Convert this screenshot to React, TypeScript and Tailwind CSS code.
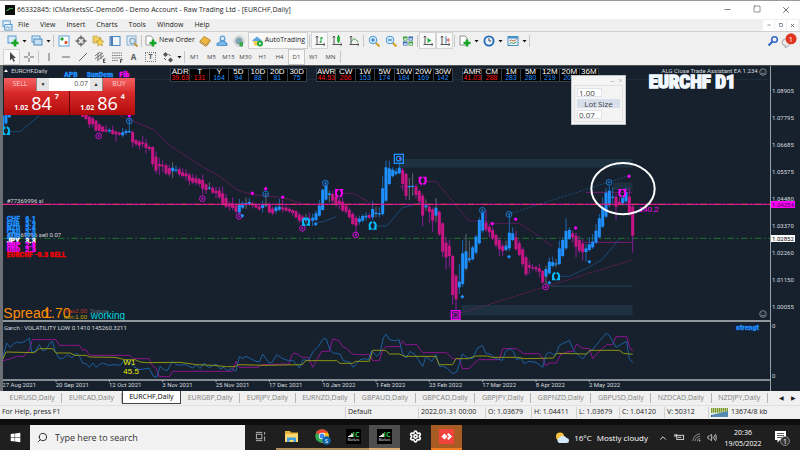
import { ReactNode, useState } from "react";
import { Search, Minus, Square, X, ChevronUp, Settings } from "lucide-react";
import { FaWindows } from "react-icons/fa";

// [high, top, bottom, low, kind], kind: 0 down, 1 up, 2 up with grey wick
type Bar = [number, number, number, number, number];

const leftBars: Bar[] = [
  [155, 155, 190, 195, 1],
  [150, 153, 178, 182, 1],
  [150, 153, 160, 162, 1],
];

const bars: Bar[] = [
  [150, 153, 158, 160, 0], [150, 153, 165, 168, 0], [155, 158, 181, 192, 0],
  [158, 163, 181, 190, 0], [168, 170, 200, 203, 0], [178, 181, 200, 205, 0],
  [185, 188, 203, 206, 0], [183, 197, 203, 205, 0], [192, 198, 201, 208, 1],
  [185, 198, 210, 213, 0], [200, 203, 211, 233, 0], [203, 206, 212, 216, 0],
  [192, 205, 214, 220, 1], [195, 201, 207, 213, 1], [160, 201, 204, 207, 1],
  [200, 204, 235, 250, 0], [225, 228, 241, 246, 0], [228, 233, 245, 256, 0],
  [215, 235, 240, 250, 0], [225, 238, 252, 268, 0], [243, 249, 255, 260, 0],
  [247, 249, 300, 308, 0], [262, 278, 320, 330, 0], [282, 300, 307, 333, 0],
  [290, 303, 307, 325, 0], [298, 304, 328, 333, 0], [302, 312, 331, 338, 0],
  [295, 311, 322, 342, 2], [305, 316, 320, 326, 1], [310, 316, 331, 338, 0],
  [312, 325, 336, 341, 0], [315, 328, 337, 350, 0], [325, 332, 350, 363, 0],
  [330, 341, 355, 360, 0], [333, 343, 357, 363, 0], [342, 345, 360, 368, 0],
  [332, 348, 374, 392, 0], [358, 361, 378, 390, 0], [355, 370, 374, 378, 2],
  [365, 372, 386, 390, 0], [368, 380, 388, 403, 0], [368, 380, 400, 405, 0],
  [368, 388, 422, 425, 0], [390, 402, 428, 432, 0], [412, 418, 428, 440, 0],
  [400, 418, 432, 438, 0], [420, 425, 443, 448, 0], [405, 422, 445, 452, 1],
  [412, 418, 431, 436, 1], [400, 417, 422, 435, 2], [402, 414, 420, 425, 1],
  [412, 418, 424, 433, 0], [418, 422, 431, 434, 0], [422, 428, 436, 440, 0],
  [410, 422, 432, 446, 1], [392, 421, 425, 430, 2], [415, 422, 445, 448, 0],
  [428, 434, 448, 454, 0], [420, 430, 441, 450, 1], [405, 428, 437, 442, 1],
  [408, 430, 436, 446, 0], [425, 431, 440, 443, 0], [430, 435, 442, 448, 0],
  [436, 438, 447, 455, 0], [438, 442, 460, 464, 0], [446, 452, 470, 478, 0],
  [452, 458, 472, 485, 0], [450, 462, 470, 478, 2], [446, 464, 470, 476, 0],
  [450, 461, 470, 486, 1], [440, 448, 468, 472, 1], [408, 425, 455, 458, 1],
  [374, 377, 438, 440, 1], [352, 365, 407, 410, 1], [380, 388, 393, 415, 2],
  [380, 390, 410, 420, 0], [380, 397, 420, 428, 0], [402, 410, 423, 436, 0],
  [400, 413, 440, 444, 0], [420, 425, 443, 450, 0], [430, 438, 460, 464, 0],
  [445, 450, 480, 484, 0], [455, 462, 485, 510, 0], [455, 464, 474, 482, 1],
  [450, 456, 470, 475, 1], [445, 455, 460, 470, 1], [448, 453, 461, 466, 0],
  [410, 435, 460, 470, 1], [428, 446, 450, 460, 2], [430, 448, 452, 460, 1],
  [335, 373, 450, 455, 1], [290, 310, 410, 414, 1], [290, 313, 360, 364, 1],
  [310, 317, 337, 340, 1], [312, 322, 330, 335, 1], [300, 311, 328, 331, 1],
  [312, 318, 360, 380, 0], [325, 330, 396, 408, 0], [342, 366, 369, 408, 2],
  [328, 365, 369, 396, 2], [360, 367, 393, 404, 0], [376, 381, 412, 418, 0],
  [388, 395, 455, 486, 0], [406, 424, 430, 440, 2], [420, 428, 444, 476, 0],
  [430, 436, 470, 503, 0], [403, 431, 455, 475, 2], [440, 443, 511, 516, 0],
  [475, 478, 563, 580, 0], [520, 536, 580, 616, 0], [528, 545, 576, 610, 0],
  [572, 576, 693, 722, 0], [630, 635, 706, 740, 0], [600, 653, 670, 690, 1],
  [528, 568, 660, 668, 1], [510, 562, 614, 620, 2], [530, 583, 589, 596, 2],
  [545, 550, 586, 590, 1], [513, 518, 566, 572, 1], [460, 468, 538, 542, 1],
  [438, 446, 500, 506, 1], [438, 476, 497, 505, 0], [480, 488, 505, 520, 0],
  [490, 498, 524, 528, 0], [508, 513, 544, 550, 0], [520, 528, 556, 576, 0],
  [538, 546, 561, 576, 0], [530, 545, 558, 562, 2], [453, 506, 553, 562, 1],
  [490, 508, 528, 532, 1], [500, 520, 556, 560, 0], [530, 538, 573, 576, 0],
  [550, 556, 600, 608, 0], [574, 580, 631, 636, 0], [590, 603, 611, 630, 0],
  [600, 609, 613, 620, 0], [605, 610, 616, 625, 0], [600, 613, 623, 640, 0],
  [618, 621, 655, 660, 0], [605, 615, 638, 660, 2], [580, 593, 628, 632, 1],
  [578, 594, 606, 610, 1], [585, 598, 602, 610, 2], [530, 553, 600, 604, 1],
  [520, 528, 576, 580, 1], [463, 501, 553, 558, 1], [490, 498, 525, 528, 1],
  [500, 508, 520, 536, 0], [506, 515, 548, 580, 0], [516, 528, 560, 568, 0],
  [525, 538, 565, 590, 0], [540, 553, 564, 592, 1], [520, 541, 558, 562, 1],
  [510, 533, 550, 555, 1], [480, 500, 536, 540, 1], [450, 463, 520, 524, 1],
  [400, 430, 488, 492, 1], [372, 386, 458, 462, 1], [365, 380, 424, 430, 1],
  [370, 398, 402, 418, 1], [390, 398, 428, 466, 0], [400, 413, 421, 424, 0],
  [395, 402, 418, 425, 1], [370, 385, 412, 418, 1], [370, 398, 450, 456, 0],
  [420, 428, 515, 566, 0],
];

const blue = "#1e90ff";
const pink = "#c71585";
const magenta = "#ff00ff";

const targets: [number, number, string][] = [
  [388, 171, "#1c78d0"], [797, 390, "#1c78d0"], [976, 357, "#1c78d0"],
  [1447, 439, "#1c78d0"], [1527, 451, "#1c78d0"], [1827, 355, "#1c78d0"],
  [296, 216, "#d010d0"], [607, 404, "#d010d0"], [717, 457, "#d010d0"],
  [907, 493, "#d010d0"], [1067, 513, "#d010d0"], [1637, 669, "#d010d0"],
];

const dots: [number, number, string][] = [
  [388, 155, magenta], [757, 388, magenta], [797, 374, magenta],
  [848, 400, magenta], [1477, 479, magenta], [1547, 466, magenta],
  [1727, 492, magenta], [1887, 337, magenta], [727, 455, blue],
  [947, 480, blue], [1387, 698, blue], [1527, 578, blue],
  [1648, 656, blue], [1768, 593, blue],
];

const dates = [
  "27 Aug 2021", "20 Sep 2021", "12 Oct 2021", "3 Nov 2021",
  "25 Nov 2021", "17 Dec 2021", "10 Jan 2022", "1 Feb 2022",
  "23 Feb 2022", "17 Mar 2022", "8 Apr 2022", "2 May 2022",
];

const prices = [
  "1.08905", "1.07795", "1.06685", "1.05575", "1.04480",
  "1.03370", "1.02260", "1.01150", "1.00055",
];

const strengths: [string, string, string][] = [
  ["CHF", "6.1", blue], ["EUR", "5.9", blue], ["NZD", "5.4", blue],
  ["CAD", "5.3", blue], ["AUD", "5.3", blue], ["JPY", "3.3", "#ffffff"],
  ["GBP", "2.8", magenta], ["USD", "2.3", magenta],
];

const ranges = [
  {
    head: ["ADR", "T", "Y", "5D", "10D", "20D", "30D"],
    vals: ["39.63", "131", "164", "94", "88", "81", "75"],
  },
  {
    head: ["AWR", "CW", "1W", "5W", "10W", "20W", "30W"],
    vals: ["44.53", "266", "153", "174", "184", "169", "142"],
  },
  {
    head: ["AMR", "CM", "1M", "5M", "12M", "20M", "36M"],
    vals: ["41.03", "288", "283", "280", "219", "204", "202"],
  },
];

const tabs = [
  "EURUSD", "EURCAD", "EURCHF", "EURGBP", "EURJPY", "EURNZD", "GBPAUD",
  "GBPCAD", "GBPJPY", "GBPNZD", "GBPUSD", "NZDCAD", "NZDJPY",
];

const blueLine =
  "8,120 20,75 30,88 40,78 50,72 60,75 75,70 88,60 95,103 105,100 118,80 128,98 138,95 150,75 157,70 165,98 178,122 190,120 203,110 215,120 230,105 238,115 248,135 258,137 268,148 278,135 288,148 298,140 310,135 325,142 345,140 360,142 375,125 390,135 405,148 418,155 438,152 447,150 460,175 470,178 480,145 492,155 502,158 517,130 530,140 545,142 555,138 567,145 578,150 590,140 600,152 612,135 625,148 635,145 648,138 660,152 672,148 682,158 695,152 708,160 718,115 728,122 738,115 752,122 768,130 778,132 788,108 800,125 807,135 817,133 830,110 845,120 865,128 880,128 898,150 910,125 925,128 940,100 955,85 970,62 978,62 990,95 1000,105 1020,108 1030,128 1050,133 1060,148 1080,125 1095,122 1105,125 1115,98 1130,115 1140,105 1150,60 1158,48 1168,65 1187,68 1197,65 1207,105 1218,120 1230,100 1245,110 1255,125 1268,145 1278,115 1295,130 1308,110 1318,145 1330,145 1343,152 1358,167 1370,162 1383,122 1387,108 1400,118 1417,122 1433,90 1447,82 1457,105 1473,110 1487,122 1507,127 1517,100 1530,92 1540,100 1550,125 1563,120 1573,138 1585,130 1608,133 1628,148 1638,110 1648,102 1660,110 1668,108 1678,82 1708,67 1720,95 1735,112 1748,123 1762,105 1780,92 1800,68 1818,46 1828,52 1838,70 1848,88 1862,80 1880,70 1888,122 1898,134";
const magentaLine =
  "8,128 30,123 50,115 72,115 88,95 97,65 168,65 178,82 238,82 248,97 258,95 268,112 390,112 400,122 447,122 458,145 468,150 478,176 508,176 518,160 698,160 708,130 718,148 775,148 785,140 867,138 875,112 882,105 895,110 905,118 925,118 938,148 965,100 988,100 998,63 1017,68 1027,85 1040,92 1057,108 1075,110 1110,110 1118,128 1138,128 1148,95 1158,86 1200,86 1207,68 1217,80 1250,80 1268,104 1340,104 1358,122 1378,122 1387,152 1407,152 1435,125 1498,125 1508,92 1550,92 1570,107 1618,107 1628,120 1637,143 1648,135 1670,135 1680,112 1700,102 1720,100 1730,78 1745,90 1768,92 1778,122 1800,98 1820,80 1838,80 1848,56 1880,56 1888,85 1898,100";
const yellowLine =
  "8,125 18,102 103,104 118,92 158,92 168,105 210,105 225,112 258,112 268,117 345,118 375,125 405,125 420,132 440,134 540,133 590,140 640,142 680,146 705,146 715,140 795,142 907,140 917,128 1010,128 1020,136 1058,136 1068,130 1108,130 1118,97 1157,97 1168,108 1198,108 1213,115 1307,115 1318,140 1358,140 1368,122 1405,122 1427,114 1463,114 1475,118 1550,118 1575,122 1660,120 1670,106 1760,108 1770,97 1858,97 1870,106 1898,109";

function Candle({ bar, index }: { bar: Bar; index: number }) {
  const [high, top, bottom, low, kind] = bar;
  const x = 8 + index * 10;
  const wick = kind === 2 ? "#5d6b74" : kind === 1 ? "#1b68b4" : "#8a1c98";
  return (
    <g>
      <path d={`M${x} ${high}V${low}`} stroke={wick} strokeWidth="3" />
      <rect
        x={x - 4.5}
        y={top}
        width="9"
        height={Math.max(bottom - top, 4)}
        fill={kind === 0 ? pink : blue}
      />
    </g>
  );
}

function Horseshoe({ x, y, up }: { x: number; y: number; up?: boolean }) {
  return (
    <path
      transform={`translate(${x} ${y}) scale(1 ${up ? 1 : -1})`}
      d="M-12 10H-6C-11 4 -11 -8 -2 -10M12 10H6C11 4 11 -8 2 -10"
      fill="none"
      stroke={up ? "#00bfff" : magenta}
      strokeWidth="6"
    />
  );
}

function PriceChart() {
  return (
    <svg viewBox="9 6 2301 762" className="block w-full">
      <path d="M9 47H2310" stroke="#223646" strokeWidth="2" />
      <rect x="1200" y="285" width="698" height="26" fill="#1d3140" />
      <rect x="1385" y="723" width="513" height="31" fill="#1d3140" />
      <rect x="1650" y="664" width="248" height="5" fill="#1d3747" />
      <rect x="1838" y="355" width="60" height="23" fill="#1d3140" />

      {/* moving levels */}
      <g fill="none" strokeWidth="2.5" stroke="#641c5c">
        <path d="M360 155L410 175L460 197L510 245L610 310L660 338L710 377L755 392L845 400L910 420" />
        <path d="M1020 388H1060L1108 415" />
        <path d="M1270 352H1308L1407 471H1450L1485 478H1558L1600 505L1657 548" />
        <path d="M1750 535H1897M1758 385H1897M1200 368H1240" stroke="#8a1c78" />
        <path d="M1380 748L1896 588" strokeDasharray="7 4" stroke="#7c1c60" />
      </g>
      <g fill="none" strokeWidth="2.5" stroke="#1d4f80">
        <path d="M20 203H60L118 155M950 475L970 473L1008 458" />
        <path d="M1120 486H1160L1208 431L1265 416M1680 637H1708L1760 613L1808 585L1858 525" />
        <path d="M1527 450L1897 332" strokeDasharray="7 4" />
      </g>

      <path d="M9 523H2310" stroke="#1f7a2c" strokeWidth="3" strokeDasharray="20 8 5 8" />

      {leftBars.map((bar, i) => (
        <Candle key={i} bar={bar} index={i} />
      ))}
      {bars.map((bar, i) => (
        <Candle key={i} bar={bar} index={i + 24} />
      ))}

      <path d="M9 421H2310" stroke="#c8109c" strokeWidth="4" />
      <path d="M9 421H2310" stroke="#e8356c" strokeWidth="3" strokeDasharray="20 8 5 8" />

      {targets.map(([x, y, color]) => (
        <g key={`${x}-${y}`} stroke={color} strokeWidth="3" fill="none">
          <circle cx={x} cy={y} r="8.5" />
          <circle cx={x} cy={y} r="2" fill={color} />
        </g>
      ))}
      {dots.map(([x, y, color]) => (
        <path key={`${x}-${y}`} d={`M${x - 6} ${y}l6 -6l6 6l-6 6z`} fill={color} />
      ))}
      <g fill="none" strokeWidth="4">
        <rect x="1183" y="271" width="27" height="27" stroke={blue} />
        <circle cx="1196" cy="284" r="7" stroke={blue} />
        <circle cx="1200" cy="284" r="3" fill="#a050ff" />
        <rect x="1354" y="740" width="26" height="26" stroke={magenta} />
        <circle cx="1367" cy="753" r="8" stroke="#c010c0" />
        <path d="M1356 742l22 22M1378 742l-22 22" stroke="#a010b0" strokeWidth="2" />
      </g>
      <Horseshoe x={18} y={200} up />
      <Horseshoe x={918} y={472} up />
      <Horseshoe x={1118} y={484} up />
      <Horseshoe x={1668} y={636} up />
      <Horseshoe x={1017} y={388} />
      <Horseshoe x={1268} y={351} />
      <Horseshoe x={1867} y={388} />

      <g className="font-['Roboto',sans-serif]" fill="#d6dade" fontSize="18">
        <path d="M12 24l6 -8l6 8z" fill="#fff" />
        <text x="34" y="28">EURCHF,Daily</text>
        <text x="20" y="417">#77369996 sl</text>
        <text x="20" y="518">#77369996 sell 0.07</text>
        <text x="2273" y="28" textAnchor="end">
          ALG Close Trade Assistant EA 1.234
        </text>
      </g>
      <g fill="none" stroke="#8d969e" strokeWidth="2.5">
        <circle cx="2289" cy="24" r="10" />
        <path d="M2283 27q6 5 12 0M2285 20v2M2293 20v2" />
        <circle cx="2289" cy="750" r="10" />
        <path d="M2283 753q6 5 12 0M2285 746v2M2293 746v2" />
      </g>

      <g className="font-['Roboto_Condensed',sans-serif] font-bold">
        <g fontSize="24" strokeWidth="1">
          <text x="192" y="38" fill={blue} stroke={blue}>APB</text>
          <text x="260" y="38" fill={blue} stroke={blue}>SunDem</text>
          <text x="358" y="40" fill={magenta} stroke={magenta}>Fib</text>
          {strengths.map(([name, value, color], i) => (
            <g key={name} fill={color} stroke={color}>
              <text x="20" y={472 + i * 13}>{name}</text>
              <text x="76" y={472 + i * 13}>{value}</text>
            </g>
          ))}
          <text x="20" y="580" fill="#ff0000" stroke="#ff0000">
            EURCHF -0.3 SELL
          </text>
        </g>
        <text x="1946" y="73" fontSize="57" fill="#f2f8ff" stroke="#f2f8ff" strokeWidth="5">
          EURCHF D1
        </text>
      </g>

      <g className="font-['Liberation_Sans',Arial,sans-serif]">
        <text x="1908" y="444" fontSize="24" fill={magenta}>-140.2</text>
        <text x="10" y="762" fontSize="42" fill="#ff8c00">Spread:</text>
        <text x="130" y="762" fontSize="42" fill="#ff8c00">1.70</text>
        <text x="192" y="748" fontSize="18" fill="#c0391c">max2.00</text>
        <text x="192" y="765" fontSize="18" fill="#c8b400">min:1.00</text>
        <text x="270" y="748" fontSize="18" fill="#5f6870">Status:</text>
        <text x="272" y="765" fontSize="30" fill="#00d5dc">working</text>
      </g>
      <ellipse cx="1869" cy="374" rx="95" ry="77" fill="none" stroke="#fff" strokeWidth="6" />
    </svg>
  );
}

function VolatilityChart() {
  return (
    <svg viewBox="9 12 2301 207" className="block w-full">
      <g fill="none" strokeWidth="3">
        <polyline points={magentaLine} stroke="#8d148f" />
        <polyline points={blueLine} stroke="#1d5f9f" />
        <polyline points={yellowLine} stroke="#8f9414" />
      </g>
      <path d="M9 186H2310" stroke="#a9b0b6" strokeWidth="4" />
      <g className="font-['Roboto',sans-serif]" fill="#d6dade" fontSize="18">
        <text x="12" y="36">Garch : VOLATILITY LOW 0.1410 145260.3211</text>
        {dates.map((date, i) => (
          <g key={date}>
            <path d={`M${8 + i * 160} 186v6`} stroke="#a9b0b6" strokeWidth="3" />
            <text x={7 + i * 160} y="208">{date}</text>
          </g>
        ))}
      </g>
      <g
        className="font-['Liberation_Sans',Arial,sans-serif]"
        fontSize="24"
        fill="#f0f000"
      >
        <text x="370" y="142">W1</text>
        <text x="370" y="168">45.5</text>
      </g>
      <text
        x="2208"
        y="36"
        fontSize="24"
        fill={blue}
        stroke={blue}
        className="font-['Roboto_Condensed',sans-serif] font-bold"
      >
        strengt
      </text>
    </svg>
  );
}

function PriceScale() {
  return (
    <div className="relative flex w-[30px] flex-none flex-col border-l border-[#9aa1a7] font-['Roboto',sans-serif] text-[6px] leading-[9px] text-[#d6dade]">
      <div className="flex-1 space-y-[18px] pt-5 pl-px">
        {prices.map((p) => (
          <div key={p}>{p}</div>
        ))}
      </div>
      <div className="flex h-[70px] flex-col justify-between pb-[11px] pl-px">
        <span>0</span>
        <span>0</span>
      </div>
      <span className="absolute top-[135px] left-0 bg-[#ff00ff] px-px leading-[7px] text-[#400040]">
        1.04254
      </span>
      <span className="absolute top-[169px] left-0 bg-white px-px leading-[7px] text-black">
        1.02852
      </span>
    </div>
  );
}

function RangeTables() {
  return (
    <div className="absolute top-[2px] left-[167px] flex gap-[9px] font-['Liberation_Sans',Arial,sans-serif]">
      {ranges.map((r) => (
        <table
          key={r.head[0]}
          className="w-[137px] table-fixed border-collapse bg-black text-center text-[8px] leading-[6px]"
        >
          <thead>
            <tr>
              {r.head.map((h) => (
                <th
                  key={h}
                  className="border-x border-t border-[#33414d] p-0 font-normal text-white"
                >
                  {h}
                </th>
              ))}
            </tr>
          </thead>
          <tbody>
            <tr>
              {r.vals.map((v, i) => (
                <td
                  key={v}
                  className={`border-x border-b border-[#33414d] p-0 text-[7px] ${
                    i < 2 ? "text-[#ff1414]" : "text-[#1e90ff]"
                  }`}
                >
                  {v}
                </td>
              ))}
            </tr>
          </tbody>
        </table>
      ))}
    </div>
  );
}

function Quote({ big, sup }: { big: string; sup: string }) {
  return (
    <button className="flex flex-1 items-end justify-center gap-[3px] bg-linear-to-b from-[#dc2c2c] to-[#b00808] pb-[3px] text-white">
      <b className="text-[7px] leading-[8px]">1.02</b>
      <span className="text-[18px] leading-[17px]">{big}</span>
      <b className="self-start pt-[2px] text-[7px] leading-[8px]">{sup}</b>
    </button>
  );
}

function OneClickPanel() {
  const [volume, setVolume] = useState("0.07");
  const tradeBtn = `w-8 bg-linear-to-b from-[#f46060] to-[#dc3434] text-[7px]
    text-[#ffd0d0]`;
  const stepBtn = "w-3 bg-[#e4e4e4] text-[5px] text-[#222]";
  return (
    <div className="absolute top-[12px] left-[1px] flex h-[37px] w-[131px] flex-col bg-[#600]">
      <div className="flex h-[13px] justify-between">
        <button className={tradeBtn}>SELL</button>
        <div className="flex flex-1 border-x border-[#888] bg-white">
          <button className={stepBtn}>▼</button>
          <input
            aria-label="Volume"
            value={volume}
            onChange={(e) => setVolume(e.target.value)}
            className="w-0 flex-1 pr-[2px] text-right text-[7px] text-[#555]"
          />
          <button className={stepBtn}>▲</button>
        </div>
        <button className={tradeBtn}>BUY</button>
      </div>
      <div className="flex flex-1 gap-px">
        <Quote big="84" sup="7" />
        <Quote big="86" sup="4" />
      </div>
    </div>
  );
}

function LotPanel() {
  const field = `h-[9px] w-[25px] border border-[#dde3ea] bg-white pl-[1px]
    text-[8px] leading-[7px] text-[#444]`;
  return (
    <div className="absolute top-[9px] left-[568px] w-[55px] border border-[#bfc3c7] bg-[#f4f4f4]">
      <div className="flex h-[9px] items-center justify-end gap-[3px] pr-[2px] text-[#888]">
        <Minus className="mt-[2px] size-[5px]" />
        <X className="size-[5px]" />
      </div>
      <div className="mx-[2px] mb-[2px] flex h-[37px] flex-col items-start justify-center gap-[2px] border border-[#e2e2e2] pl-[2px]">
        <input aria-label="Risk" defaultValue="1.00" className={field} />
        <button className="h-[9px] w-[43px] bg-[#d8dfea] text-[8px] leading-[9px] text-[#444]">
          Lot Size
        </button>
        <input aria-label="Lots" defaultValue="0.07" className={field} />
      </div>
    </div>
  );
}

function Tool({
  label,
  pressed,
  children,
}: {
  label: string;
  pressed?: boolean;
  children: ReactNode;
}) {
  return (
    <button
      aria-label={label}
      className={`flex h-full w-[17px] flex-none items-center justify-center ${
        pressed ? "border border-[#d4d4d4] bg-[#f8f8f8]" : ""
      }`}
    >
      <svg viewBox="0 0 12 12" className="size-[12px] flex-none" fill="none">
        {children}
      </svg>
    </button>
  );
}

function Caret() {
  return (
    <svg viewBox="0 0 7 8" className="w-[7px] flex-none">
      <path d="M1.5 3h4l-2 2.5z" fill="#111" />
    </svg>
  );
}

function Sep() {
  return <span className="mx-px h-3 w-px flex-none bg-[#c6c6c6]" />;
}

const plus = <path d="M8 4.5v7M4.5 8h7" stroke="#16a526" strokeWidth="2.6" />;
const axes = (
  <path
    d="M3 1v9M1.5 9.5H11M1.8 2.5L3 1l1.2 1.5M9.6 8.2L11 9.5L9.6 10.8"
    stroke="#555"
  />
);

function MainToolbar() {
  return (
    <div className="flex h-[17px] items-center pl-1">
      <Tool label="New chart">
        <rect x="1" y="1" width="8" height="7" fill="#d9ecfa" stroke="#5a96c8" />
        {plus}
      </Tool>
      <Caret />
      <Tool label="Profiles">
        <rect x="1" y="1" width="8" height="6" fill="#d9ecfa" stroke="#5a96c8" />
        <rect x="3" y="4" width="8" height="6" fill="#c4dff4" stroke="#4a86b8" />
      </Tool>
      <Caret />
      <Sep />
      <Tool label="Market watch">
        <rect x="1" y="1" width="10" height="10" fill="#fff" stroke="#5aa2dc" />
        <path d="M4 2.5v3M2.5 4h3" stroke="#18a030" strokeWidth="2" />
        <path d="M8 6v3M6.5 7.5h3" stroke="#e0502a" strokeWidth="2" />
      </Tool>
      <Tool label="Data window">
        <circle cx="6" cy="6" r="3.5" stroke="#666" strokeWidth="1.3" />
        <path d="M6 0.5v4M6 7.5v4M0.5 6h4M7.5 6h4" stroke="#666" strokeWidth="1.3" />
      </Tool>
      <Tool label="Navigator">
        <path d="M1 1h4l1 1.5h3V8H1z" fill="#f0cf62" stroke="#b8923a" strokeWidth="0.6" />
        <path d="M8 3.5l1.2 2.4 2.6.3-1.9 1.9.5 2.7L8 9.6l-2.4 1.2.5-2.7-1.9-1.9 2.6-.3z" fill="#f8d850" stroke="#a98528" strokeWidth="0.6" />
      </Tool>
      <Tool label="Terminal">
        <rect x="1" y="1.5" width="10" height="9" fill="#eef6fc" stroke="#4a86c0" />
        <path d="M2.8 2v8" stroke="#4a78b8" strokeWidth="2.4" />
      </Tool>
      <Tool label="Strategy tester">
        <rect x="1" y="1" width="9" height="9" fill="#dcecf8" stroke="#88b0d0" />
        <circle cx="6.5" cy="6" r="2.8" fill="#cfe6f6" stroke="#7290a8" />
        <path d="M8.5 8.5l3 3" stroke="#c99426" strokeWidth="1.8" />
      </Tool>
      <Sep />
      <button className="flex items-center whitespace-nowrap px-[2px]">
        <svg viewBox="0 0 12 12" className="mr-[2px] size-[12px]" fill="none">
          <path d="M1 1h5l2 2v7H1z" fill="#fff" stroke="#888" strokeWidth="0.8" />
          {plus}
        </svg>
        New Order
      </button>
      <Tool label="MetaEditor">
        <path d="M1 6l4-4.5 6 3.5-4 5z" fill="#f0b83c" stroke="#b07820" strokeWidth="0.8" />
        <path d="M1 6v1.5L7 11.5l4-5V5" stroke="#b87c24" />
      </Tool>
      <Tool label="Community">
        <circle cx="6.5" cy="3.5" r="2.5" fill="#cfe6f8" stroke="#3a86c8" />
        <path d="M1 10.5V8h2l1-2h5v2h2v2.5z" fill="#7ab8ea" stroke="#3a86c8" strokeWidth="0.8" />
      </Tool>
      <Tool label="Signals">
        <circle cx="6" cy="6" r="5" stroke="#b0b6bc" strokeWidth="0.8" />
        <circle cx="6" cy="6" r="3.2" fill="#7aa8b8" stroke="#8a989c" />
        <path d="M6.5 7H10v4.5H6.5z" fill="#38a848" />
      </Tool>
      <button className="flex h-full items-center whitespace-nowrap border border-[#d0d0d0] bg-[#f8f8f8] px-[2px]">
        <svg viewBox="0 0 12 12" className="mr-[2px] size-[12px]" fill="none">
          <path d="M1 5.5L6 1.5l5 4-5 1.5z" fill="#5aa6e0" />
          <path d="M2 6h8l-1.5 4.5h-5z" fill="#f4cc4c" />
          <circle cx="9" cy="8.5" r="3" fill="#1ea838" />
          <path d="M8.2 7l2.2 1.5-2.2 1.5z" fill="#fff" />
        </svg>
        AutoTrading
      </button>
      <Sep />
      <Tool label="Bar chart" pressed>
        {axes}
        <path d="M7 2v6M7 3h2M5.5 7H7" stroke="#18a030" />
      </Tool>
      <Tool label="Candlesticks">
        {axes}
        <path d="M7.5 0v8" stroke="#168a28" />
        <rect x="6" y="1.5" width="3" height="5" fill="#22b83c" />
      </Tool>
      <Tool label="Line chart">
        {axes}
        <path d="M3 7c3-5 5-3 7 0" stroke="#3a9a48" />
      </Tool>
      <Sep />
      {["Zoom in", "Zoom out"].map((label) => (
        <Tool key={label} label={label}>
          <path d="M7.5 7.5l4 4" stroke="#d4a42c" strokeWidth="2.2" />
          <circle cx="5" cy="5" r="3.8" fill="#d4ecfc" stroke="#4c9ad8" />
          <path d={label === "Zoom in" ? "M5 3v4M3 5h4" : "M3 5h4"} stroke="#2c78c0" strokeWidth="1.2" />
        </Tool>
      ))}
      <Tool label="Tile windows">
        <path d="M1 3.5h4.5M6.5 8.5H11" stroke="#3d9e34" strokeWidth="4" />
        <path d="M6.5 3.5H11M1 8.5h4.5" stroke="#3468b4" strokeWidth="4" />
        <path d="M1.8 4h3M7.3 4h3M1.8 9h3M7.3 9h3" stroke="#e8f2fa" strokeWidth="1.5" />
      </Tool>
      <Sep />
      <Tool label="Auto scroll" pressed>
        {axes}
        <path d="M5.5 3l4 2.5-4 2.5z" fill="#1fae34" />
      </Tool>
      <Tool label="Chart shift" pressed>
        {axes}
        <path d="M7 1.5v7" stroke="#3a78b8" />
        <path d="M11 5H8.5M9.8 3.5L8.2 5l1.6 1.5" stroke="#d8482c" />
      </Tool>
      <Sep />
      <Tool label="Indicators">
        <path d="M1 1h5l2 2v7H1z" fill="#fff" stroke="#777" strokeWidth="0.8" />
        {plus}
      </Tool>
      <Caret />
      <Tool label="Periods">
        <circle cx="6" cy="6" r="4.6" fill="#e6f2fc" stroke="#1f66b4" strokeWidth="1.8" />
        <path d="M6 3.2V6h2.2" stroke="#444" />
      </Tool>
      <Caret />
      <Tool label="Templates">
        <rect x="1" y="1.5" width="10" height="9" fill="#e8f3fb" stroke="#4a90c8" />
        <path d="M1 2.5h10" stroke="#4a90c8" strokeWidth="2" />
        <path d="M2.5 6l2-1 2 1 3-1.5" stroke="#d06a3a" />
        <path d="M2.5 9l2-1.5 2 1 3-1.5" stroke="#3a9a48" />
      </Tool>
      <Caret />
      <Sep />
      <div className="ml-auto flex h-full items-center">
        <Tool label="Search">
          <circle cx="7.5" cy="4.5" r="2.8" stroke="#3564c8" strokeWidth="1.5" />
          <path d="M5.3 6.7L1.5 10.5" stroke="#3564c8" strokeWidth="2" />
        </Tool>
        <button className="relative mr-[2px] w-[17px]" aria-label="Messages">
          <svg viewBox="0 0 16 14" className="w-full">
            <path d="M1 9a4 3.5 0 1 1 6 3l-3 2v-2a4 3 0 0 1-3-3z" fill="#e8e8e8" stroke="#999" strokeWidth="0.8" />
            <circle cx="9.5" cy="5.5" r="5.2" fill="#e03420" />
          </svg>
          <span className="absolute top-[1px] right-[5px] text-[8px] leading-[10px] text-white">
            1
          </span>
        </button>
      </div>
    </div>
  );
}

function DrawToolbar() {
  const [period, setPeriod] = useState("D1");
  return (
    <div className="flex h-4 items-center pl-[3px]">
      <Tool label="Cursor" pressed>
        <path d="M4 1v8.5l2-2 1.4 3.2 1.5-.7L7.5 7H10z" fill="#444" />
      </Tool>
      <Tool label="Crosshair">
        <path d="M6 1v4M6 7v4M1 6h4M7 6h4" stroke="#666" />
      </Tool>
      <Sep />
      <Tool label="Vertical line">
        <path d="M6 2v8" stroke="#666" />
      </Tool>
      <Tool label="Horizontal line">
        <path d="M2 6h8" stroke="#666" />
      </Tool>
      <Tool label="Trendline">
        <path d="M2 10l8-8" stroke="#666" />
      </Tool>
      <Tool label="Channel">
        <path d="M1 8l8-6M1 5l5-4M3 10l7-5.5M4 2v7M7 1v7" stroke="#666" strokeWidth="0.9" />
        <path d="M11.5 8h-2v3.5h2M9.5 9.7H11" stroke="#444" strokeWidth="0.9" />
      </Tool>
      <Tool label="Fibonacci">
        <path d="M1 2h10M1 4.5h10M1 7h10M1 9.5h6" stroke="#777" strokeDasharray="1.5 .7" />
        <path d="M11.5 8.5h-2V12M9.5 10H11" stroke="#444" strokeWidth="0.9" />
      </Tool>
      <button className="w-[17px] text-[8px] font-bold text-[#555]">A</button>
      <button className="flex w-[17px] justify-center">
        <span className="border border-dotted border-[#777] px-[2px] leading-[8px] font-bold text-[#555]">
          T
        </span>
      </button>
      <Tool label="Arrows">
        <path d="M3.5 1L6 3.5 3.5 6 1 3.5zM8.5 6.5L11 9 8.5 11.5 6 9z" fill="#555" />
        <path d="M2 7l2 2M6.5 3.5l2 1" stroke="#555" />
      </Tool>
      <Caret />
      <Sep />
      {["M1", "M5", "M15", "M30", "H1", "H4", "D1", "W1", "MN"].map((p) => (
        <button
          key={p}
          onClick={() => setPeriod(p)}
          className={`h-full w-[17px] text-[6px] text-[#444] ${
            period === p ? "border border-[#c8c8c8] bg-[#f8f8f8]" : ""
          }`}
        >
          {p}
        </button>
      ))}
      <Sep />
    </div>
  );
}

function TitleBar() {
  return (
    <div className="flex h-[19px] items-center border-t border-[#9a9a9a] bg-white pl-[5px]">
      <svg viewBox="0 0 10 10" className="mr-[2px] size-[10px]">
        <rect width="10" height="10" fill="#0c0f0c" />
        <path d="M1.5 5.5H3v-1h1.5v-1H8" stroke="#2fae48" fill="none" />
      </svg>
      <span>
        66332845: ICMarketsSC-Demo06 - Demo Account - Raw Trading Ltd -
        [EURCHF,Daily]
      </span>
      <div className="ml-auto flex text-[#555]">
        <button aria-label="Minimize" className="flex w-[29px] justify-center">
          <Minus className="size-[9px]" />
        </button>
        <button aria-label="Maximize" className="flex w-[29px] justify-center">
          <Square className="size-[8px]" />
        </button>
        <button aria-label="Close" className="flex w-[29px] justify-center">
          <X className="size-[10px]" />
        </button>
      </div>
    </div>
  );
}

function MenuBar() {
  const boxBtn = "flex size-[11px] items-center justify-center bg-white";
  return (
    <div className="flex h-[13px] items-center border-b border-[#cfcfcf] pl-[2px]">
      <svg viewBox="0 0 12 12" className="mr-[5px] size-[11px]" fill="#e4f1fb" stroke="#4d93cc">
        <rect x="1" y="1" width="8" height="6" />
        <rect x="3" y="5" width="8" height="6" />
        <path d="M4 8.5l2-1 2 1.5 2-2" fill="none" />
      </svg>
      <nav className="flex gap-[11px]">
        {["File", "View", "Insert", "Charts", "Tools", "Window", "Help"].map((m) => (
          <button key={m}>{m}</button>
        ))}
      </nav>
      <div className="ml-auto flex gap-px pr-[2px] text-[#567]">
        <button aria-label="Minimize chart" className={boxBtn}>
          <Minus className="size-[4px]" strokeWidth={4} />
        </button>
        <button aria-label="Restore chart" className={boxBtn}>
          <Square className="size-[4px]" strokeWidth={4} />
        </button>
        <button aria-label="Close chart" className={boxBtn}>
          <X className="size-[5px]" strokeWidth={4} />
        </button>
      </div>
    </div>
  );
}

function ChartTabs() {
  const [active, setActive] = useState("EURCHF");
  return (
    <div className="flex h-[14px] items-center bg-[#f0f0f0] pl-[3px] text-[7px]">
      <div className="flex h-full flex-1 items-center pb-[1px]">
        {tabs.map((t) => (
          <button
            key={t}
            onClick={() => setActive(t)}
            className={`flex-auto whitespace-nowrap ${
              active === t
                ? "h-full border border-t-0 border-[#444] bg-white text-black"
                : "h-[10px] border-r border-[#b4b4b4] leading-[10px] text-[#808080]"
            }`}
          >
            {t},Daily
          </button>
        ))}
      </div>
      <div className="flex w-8 justify-end gap-[7px] pr-[4px] text-[6px]">
        <button aria-label="Previous tab">◀</button>
        <button aria-label="Next tab">▶</button>
      </div>
    </div>
  );
}

function StatusBar() {
  const cell = "border-l border-[#d0d0d0] pl-[2px]";
  return (
    <div className="flex h-[14px] items-center whitespace-nowrap border-t border-[#e0e0e0] bg-[#f0f0f0] text-[7px]">
      <span className="flex-1 pl-[2px]">For Help, press F1</span>
      <span className={`${cell} w-[73px]`}>Default</span>
      <span className={`${cell} w-[67px]`}>2022.01.31 00:00</span>
      <span className={`${cell} w-[46px]`}>O: 1.03679</span>
      <span className={`${cell} w-[45px]`}>H: 1.04411</span>
      <span className={`${cell} w-[43px]`}>L: 1.03679</span>
      <span className={`${cell} w-[45px]`}>C: 1.04120</span>
      <span className={`${cell} w-[44px]`}>V: 50312</span>
      <span className={`${cell} flex w-[92px] items-center gap-[3px]`}>
        <svg viewBox="0 0 17 9" className="h-[9px] w-[17px]">
          <path d="M0 2.5h17" stroke="#7f9c2c" strokeWidth="5" strokeDasharray="1.5 .5" />
          <path d="M0 9V7L17 3v6z" fill="#1f6a9a" />
          <path d="M2 4v5M4 4v5M6 4v5M8 4v5M10 4v5M12 3v6M14 3v6M16 3v6" stroke="#f0f0f0" strokeWidth="0.5" />
        </svg>
        13674/8 kb
      </span>
    </div>
  );
}

function TaskApp({
  label,
  className = "",
  children,
}: {
  label: string;
  className?: string;
  children: ReactNode;
}) {
  return (
    <button
      aria-label={label}
      className={`flex w-[31px] items-center justify-center border-b-2 ${
        className || "border-transparent"
      }`}
    >
      {children}
    </button>
  );
}

function MarketsIcon() {
  return (
    <span className="flex size-[15px] flex-col items-center justify-center bg-black leading-none">
      <span className="flex items-end text-[7px] leading-[7px] font-bold text-[#35c04c]">
        <svg viewBox="0 0 5 5" className="mb-[1px] size-[5px]">
          <path d="M0 4h1.5V3H3V1.5h2V5H0z" fill="#ddd" />
        </svg>
        IC
      </span>
      <span className="text-[3px] leading-[4px] text-white">Markets</span>
    </span>
  );
}

function Taskbar() {
  return (
    <div className="flex h-[25px] bg-[#201f1f] text-white">
      <button aria-label="Start" className="flex w-[30px] items-center justify-center">
        <FaWindows className="size-[11px]" />
      </button>
      <label className="flex w-[215px] items-center bg-[#f2f2f2] pl-[7px] text-[#222]">
        <Search className="size-[11px] -scale-x-100" />
        <input
          placeholder="Type here to search"
          className="ml-[7px] w-0 flex-1 text-[9px] placeholder:text-[#333]"
        />
      </label>
      <TaskApp label="Task view">
        <svg viewBox="0 0 12 12" className="size-[11px]" fill="none" stroke="#bbb">
          <path d="M1 1.5h7M1 10.5h7M10.5 1v3M10.5 6v5" />
          <rect x="1.5" y="3.5" width="6" height="5" />
        </svg>
      </TaskApp>
      <TaskApp label="File Explorer" className="border-[#b08d5c]">
        <svg viewBox="0 0 15 13" className="w-[15px]">
          <path d="M1 1h5l1 1.5h7V12H1z" fill="#e8b339" />
          <path d="M1 4h13v8H1z" fill="#fbd872" />
          <path d="M3 12V7.5h9V12H9.5v-2h-4v2z" fill="#3f9fe0" />
        </svg>
      </TaskApp>
      <TaskApp label="Chrome" className="border-[#b08d5c]">
        <svg viewBox="0 0 16 16" className="size-[16px]">
          <circle cx="7" cy="7" r="6.8" fill="#34a853" />
          <path d="M7 7L1 3.8A6.8 6.8 0 0 1 13 3.8z" fill="#ea4335" />
          <path d="M7 3.8h6A6.8 6.8 0 0 1 6.5 13.8L10 8.5z" fill="#fbbc05" />
          <circle cx="7" cy="7" r="3.2" fill="#fff" />
          <circle cx="7" cy="7" r="2.5" fill="#4285f4" />
          <circle cx="11.5" cy="11.5" r="4.3" fill="#0c62a8" />
          <text x="11.5" y="13.7" fontSize="6" textAnchor="middle" fill="#fff">S</text>
        </svg>
      </TaskApp>
      <TaskApp label="IC Markets" className="border-[#b08d5c]">
        <MarketsIcon />
      </TaskApp>
      <TaskApp label="IC Markets demo" className="border-[#d8b078] bg-[#4e4e4e]">
        <MarketsIcon />
      </TaskApp>
      <TaskApp label="Settings">
        <Settings className="size-[13px]" strokeWidth={3} />
      </TaskApp>
      <TaskApp label="AnyDesk" className="border-[#f07c1c] bg-[#a85c24]">
        <svg viewBox="0 0 15 15" className="size-[15px]">
          <rect width="15" height="15" fill="#f0443c" />
          <path d="M5.5 4.5l3 3-3 3-3-3zM8 5.5L9.5 4 13 7.5 9.5 11 8 9.5l2-2z" fill="#fff" />
        </svg>
      </TaskApp>
      <div className="ml-auto flex items-center whitespace-nowrap">
        <svg viewBox="0 0 14 11" className="mr-[5px] w-[14px]">
          <circle cx="5" cy="4.5" r="4" fill="#f8c23c" />
          <path d="M4 11a3 3 0 0 1 .5-5.5 4 4 0 0 1 7 .5 2.5 2.5 0 0 1 0 5z" fill="#d4e8f8" />
        </svg>
        <span className="mr-[5px] text-[8px]">16°C</span>
        <span className="text-[8px]">Mostly cloudy</span>
        <div className="flex w-[72px] items-center justify-around pl-[7px]">
          <ChevronUp className="size-[10px]" />
          <svg viewBox="0 0 12 9" className="w-[11px]" fill="none" stroke="#ddd">
            <rect x="3" y="2.5" width="7.5" height="4.5" />
            <path d="M4 4.7h4M1 1v3M3 1v2M.5 3h3" />
          </svg>
          <svg viewBox="0 0 10 10" className="w-[9px]" fill="none" stroke="#999">
            <path d="M1 9a8 8 0 0 1 8-8M3.5 9A5.5 5.5 0 0 1 9 3.5M6 9a3 3 0 0 1 3-3" />
            <circle cx="8.5" cy="8.5" r="0.6" fill="#ddd" />
          </svg>
          <svg viewBox="0 0 11 10" className="w-[10px]" fill="none" stroke="#ccc" strokeWidth="0.9">
            <path d="M1 3.5h1.5l2.5-2v7l-2.5-2H1zM6.5 3.5q1 1.5 0 3M8 2.2q2 2.8 0 5.6M9.3 1q2.8 4 0 8" />
          </svg>
        </div>
        <div className="w-[46px] text-center text-[7px] leading-[11px]">
          <div>20:36</div>
          <div>19/05/2022</div>
        </div>
        <button aria-label="Notifications" className="flex w-[34px] pl-[8px]">
          <svg viewBox="0 0 16 16" className="size-[16px]">
            <path d="M1 1h11v9H6l-2.5 2.5V10H1z" fill="#fff" />
            <path d="M3 3.5h7M3 5.5h7M3 7.5h5" stroke="#333" strokeWidth="0.8" />
            <circle cx="11" cy="11" r="4.5" fill="#333" stroke="#999" strokeWidth="0.8" />
            <text x="11" y="13.5" fontSize="7" textAnchor="middle" fill="#fff">1</text>
          </svg>
        </button>
      </div>
    </div>
  );
}

export default function App() {
  return (
    <div className="flex min-h-screen flex-col bg-[#0c0d0c] font-['Open_Sans',sans-serif] text-[#1c1c1c]">
      <div className="bg-[#f0f0f0] text-[7px]">
        <TitleBar />
        <MenuBar />
        <MainToolbar />
        <DrawToolbar />
      </div>
      {/* chart window */}
      <div className="flex border-t border-l-[3px] border-t-[#555] border-l-[#6c7074] bg-[#16212d]">
        <div className="relative min-w-0 flex-1">
          <PriceChart />
          <RangeTables />
          <OneClickPanel />
          <LotPanel />
          <div className="h-[2px] bg-[#8f979d]" />
          <VolatilityChart />
        </div>
        <PriceScale />
      </div>
      <ChartTabs />
      <StatusBar />
      <div className="mt-auto pt-[6px]">
        <Taskbar />
      </div>
    </div>
  );
}
